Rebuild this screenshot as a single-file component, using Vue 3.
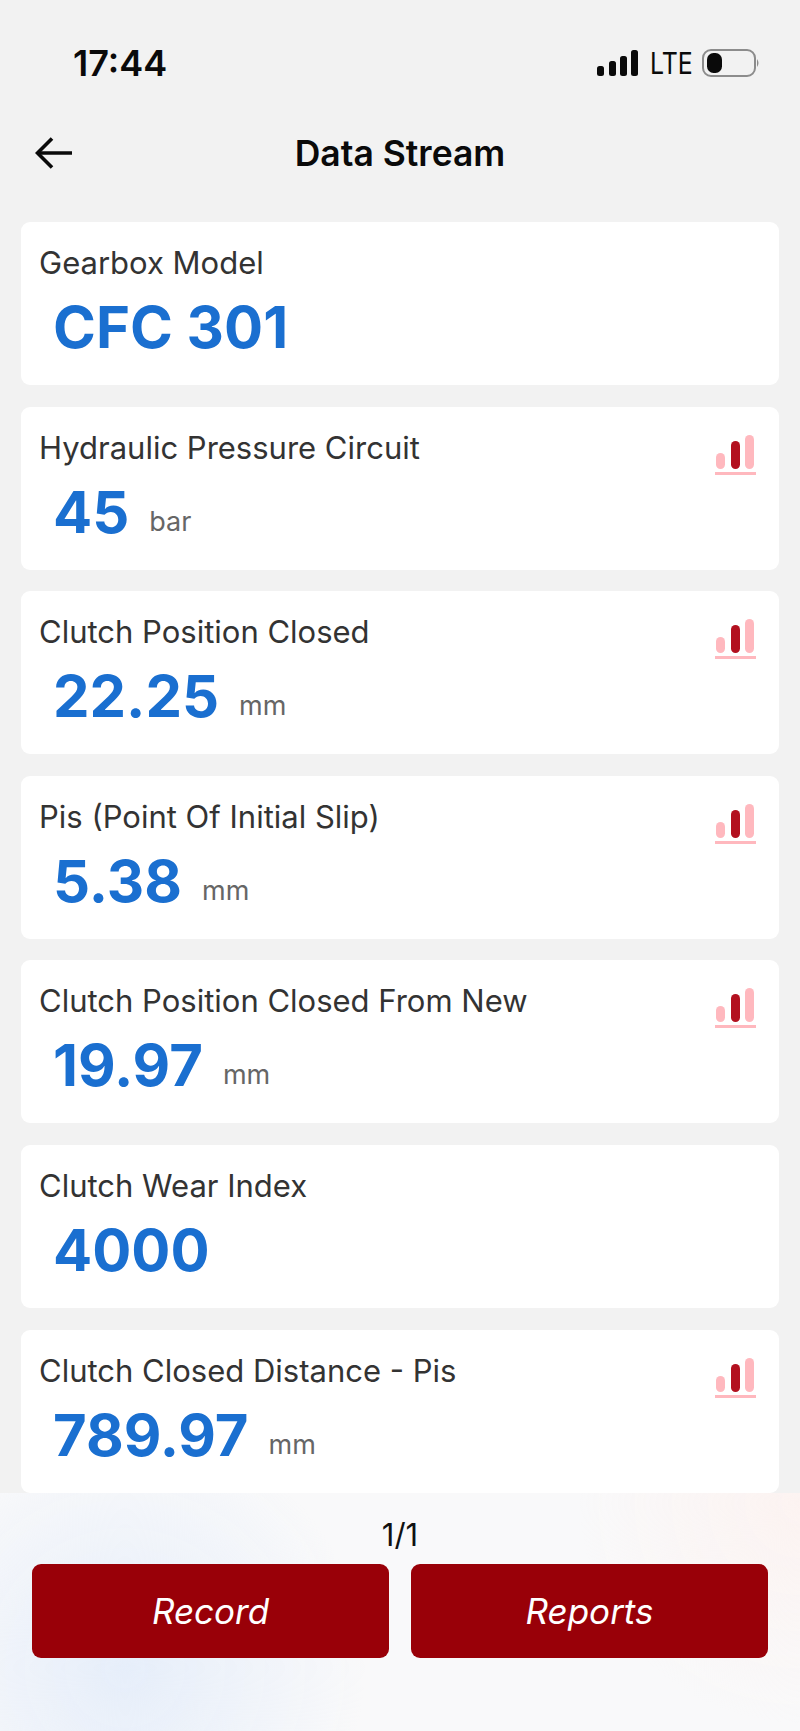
<template>
  <div class="page">
    <div class="status-bar">
      <span class="time">17:44</span>
      <div class="status-right">
        <svg class="signal" width="42" height="26" viewBox="0 0 42 26">
          <rect x="0" y="16" width="7" height="10" rx="2.5" />
          <rect x="12" y="11" width="7" height="15" rx="2.5" />
          <rect x="23" y="6" width="7" height="20" rx="2.5" />
          <rect x="34" y="0" width="7" height="26" rx="2.5" />
        </svg>
        <span class="lte">LTE</span>
        <svg class="battery" width="58" height="28" viewBox="0 0 58 28">
          <rect x="1" y="1" width="52" height="26" rx="8" fill="none" stroke="#8c8c8c" stroke-width="2" />
          <rect x="5" y="4" width="15" height="20" rx="6.5" fill="#0a0a0a" />
          <path d="M55 10 Q58 14 55 18 Z" fill="#8c8c8c" />
        </svg>
      </div>
    </div>

    <div class="nav">
      <svg class="back" width="38" height="32" viewBox="0 0 38 32" fill="none" stroke="#0a0a0a" stroke-width="3.6">
        <path d="M37 16 H3" />
        <path d="M17 1.5 L2.5 16 L17 30.5" />
      </svg>
      <h1 class="nav-title">Data Stream</h1>
    </div>

    <div class="list">
      <div v-for="item in items" :key="item.label" class="card">
        <div class="label">{{ item.label }}</div>
        <div class="value-row">
          <span class="value">{{ item.value }}</span>
          <span v-if="item.unit" class="unit">{{ item.unit }}</span>
        </div>
        <svg v-if="item.chart" class="chart" width="42" height="42" viewBox="0 0 42 42">
          <rect x="1" y="18" width="9" height="16" rx="4.5" fill="#ffb8be" />
          <rect x="16" y="6" width="9" height="28" rx="4.5" fill="#b3101f" />
          <rect x="30" y="0" width="9" height="34" rx="4.5" fill="#ffb8be" />
          <rect x="0" y="37" width="41" height="3" fill="#ffb8be" />
        </svg>
      </div>
    </div>

    <div class="footer">
      <div class="pager">1/1</div>
      <div class="actions">
        <button class="action">Record</button>
        <button class="action">Reports</button>
      </div>
    </div>
  </div>
</template>

<script setup>
const items = [
  { label: 'Gearbox Model', value: 'CFC 301', unit: '', chart: false },
  { label: 'Hydraulic Pressure Circuit', value: '45', unit: 'bar', chart: true },
  { label: 'Clutch Position Closed', value: '22.25', unit: 'mm', chart: true },
  { label: 'Pis (Point Of Initial Slip)', value: '5.38', unit: 'mm', chart: true },
  { label: 'Clutch Position Closed From New', value: '19.97', unit: 'mm', chart: true },
  { label: 'Clutch Wear Index', value: '4000', unit: '', chart: false },
  { label: 'Clutch Closed Distance - Pis', value: '789.97', unit: 'mm', chart: true },
];
</script>

<style>
html,
body {
  margin: 0;
  background: #f2f2f2;
}
</style>

<style scoped>
.page {
  width: 800px;
  height: 1731px;
  overflow: hidden;
  background: #f2f2f2;
  font-family: Inter, "Liberation Sans", sans-serif;
  display: flex;
  flex-direction: column;
}

.status-bar {
  display: flex;
  justify-content: space-between;
  align-items: center;
  height: 26px;
  padding: 50px 40px 0 73px;
}

.time {
  font-size: 36px;
  font-weight: 600;
  color: #0a0a0a;
}

.status-right {
  display: flex;
  align-items: center;
}

.signal {
  fill: #0a0a0a;
  margin-right: 11px;
}

.lte {
  display: block;
  width: 41px;
  margin-right: 11px;
  font-size: 30px;
  color: #0a0a0a;
  transform: scaleX(0.83);
  transform-origin: left center;
}

.nav {
  display: flex;
  align-items: center;
  justify-content: center;
  position: relative;
  height: 40px;
  margin-top: 57px;
}

.back {
  position: absolute;
  left: 35px;
  top: 4px;
}

.nav-title {
  margin: 0;
  font-size: 35.5px;
  font-weight: 600;
  color: #0a0a0a;
}

.list {
  display: flex;
  flex-direction: column;
  gap: 21.6px;
  padding: 49px 21px 0;
}

.card {
  position: relative;
  height: 163px;
  box-sizing: border-box;
  padding: 23px 18px 0;
  background: #fff;
  border-radius: 9px;
}

.label {
  font-size: 31px;
  line-height: 36px;
  color: #333;
}

.value-row {
  display: flex;
  align-items: baseline;
  margin-top: 11px;
  padding-left: 14px;
}

.value {
  font-size: 58px;
  line-height: 70px;
  font-weight: 700;
  color: #1a6fd0;
}

.unit {
  margin-left: 20px;
  font-size: 27px;
  color: #666;
  transform: translateY(-2px);
}

.chart {
  position: absolute;
  top: 28px;
  right: 22px;
}

.footer {
  flex: 1;
  padding-top: 22px;
  background:
    radial-gradient(circle at 125px 175px, #e6eefa 0, rgba(230, 238, 250, 0) 240px),
    radial-gradient(circle at 800px 10px, #fcf3f1 0, rgba(252, 243, 241, 0) 220px),
    #f9f9fa;
}

.pager {
  text-align: center;
  font-size: 31px;
  line-height: 40px;
  color: #111;
}

.actions {
  display: flex;
  gap: 22px;
  padding: 9px 32px 0;
}

.action {
  flex: 1;
  height: 94px;
  border: none;
  border-radius: 9px;
  background: #990008;
  color: #fff;
  font-family: inherit;
  font-size: 35px;
  font-style: italic;
}
</style>
